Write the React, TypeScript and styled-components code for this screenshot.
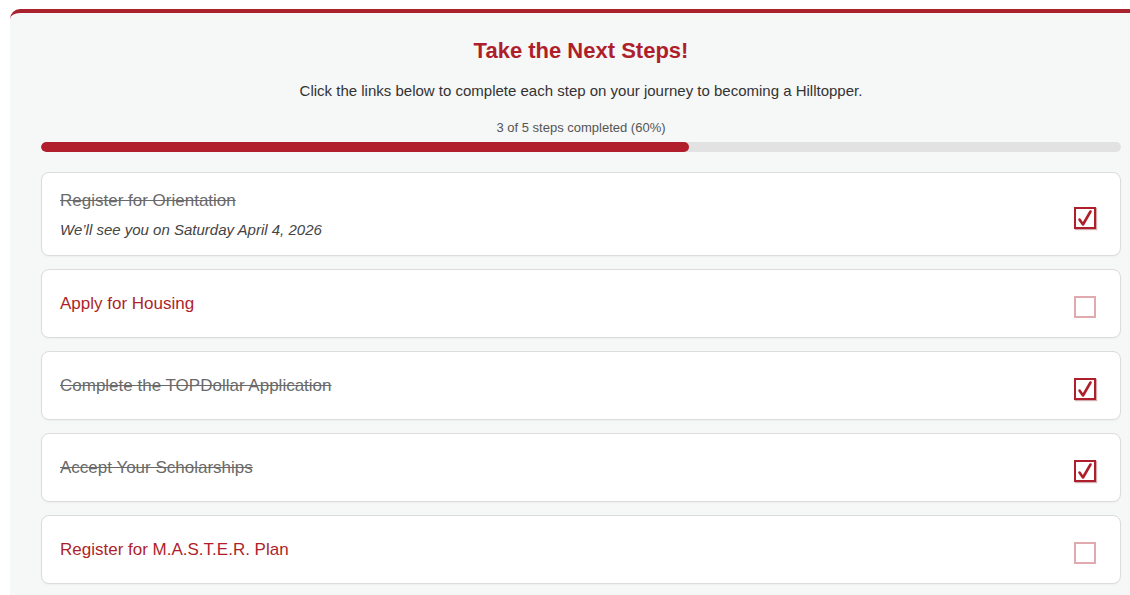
import React from "react";
import styled, { createGlobalStyle } from "styled-components";

const Global = createGlobalStyle`
  html, body { margin: 0; padding: 0; background: #ffffff; overflow: hidden; }
  body { font-family: "Liberation Sans", Arial, sans-serif; }
`;

const Page = styled.div`
  padding: 9px 0 0 10px;
`;

const Panel = styled.section`
  width: 1080px;
  padding: 25px 31px 40px;
  background: #f6f7f7;
  border-top: 4px solid #a8232e;
  border-top-left-radius: 10px;
  border-top-right-radius: 10px;
`;

const Title = styled.h2`
  margin: 0;
  text-align: center;
  font-size: 22px;
  line-height: 26px;
  font-weight: bold;
  color: #ae1f2b;
`;

const Intro = styled.p`
  margin: 17px 0 0;
  text-align: center;
  font-size: 15px;
  line-height: 20px;
  color: #333333;
`;

const ProgressLabel = styled.div`
  margin-top: 19px;
  text-align: center;
  font-size: 13px;
  line-height: 16px;
  color: #555555;
`;

const Track = styled.div`
  margin-top: 6px;
  height: 10px;
  border-radius: 5px;
  background: #e2e2e2;
  overflow: hidden;
`;

const Fill = styled.div`
  height: 100%;
  border-radius: 5px;
  background: #b01f2b;
`;

const List = styled.div`
  margin-top: 20px;
  display: flex;
  flex-direction: column;
  gap: 13px;
`;

const Card = styled.div`
  display: flex;
  align-items: center;
  justify-content: space-between;
  padding: 17px 24px 17px 18px;
  background: #ffffff;
  border: 1px solid #dcdcdc;
  border-radius: 8px;
  box-shadow: 0 1px 2px rgba(0, 0, 0, 0.04);
`;

const Text = styled.div`
  display: flex;
  flex-direction: column;
  gap: 10px;
`;

const StepTitle = styled.a<{ $done: boolean }>`
  font-size: 17px;
  line-height: 21px;
  color: ${(p) => (p.$done ? "#6a6a6a" : "#ae1f2b")};
  text-decoration: ${(p) => (p.$done ? "line-through" : "none")};
  cursor: pointer;
`;

const Note = styled.div`
  font-size: 15px;
  line-height: 17px;
  font-style: italic;
  color: #444444;
`;

const CheckWrap = styled.div`
  height: 33px;
  display: flex;
  align-items: flex-end;
`;

const Box = styled.div<{ $done: boolean }>`
  box-sizing: border-box;
  width: 22px;
  height: 22px;
  margin-bottom: 2px;
  border: 2px solid ${(p) => (p.$done ? "#ae1f2b" : "rgba(174, 31, 43, 0.38)")};
  box-shadow: ${(p) => (p.$done ? "1px 1px 1px rgba(120, 20, 30, 0.35)" : "none")};
  display: flex;
  align-items: center;
  justify-content: center;
`;

const CheckMark = () => (
  <svg width="18" height="18" viewBox="0 0 18 18" fill="none">
    <path
      d="M3.5 10.5 L7 15.5 L14.5 2.5"
      stroke="#ae1f2b"
      strokeWidth="2.6"
      strokeLinecap="round"
      strokeLinejoin="round"
    />
  </svg>
);

type Step = { title: string; done: boolean; note?: string };

const steps: Step[] = [
  { title: "Register for Orientation", done: true, note: "We\u2019ll see you on Saturday April 4, 2026" },
  { title: "Apply for Housing", done: false },
  { title: "Complete the TOPDollar Application", done: true },
  { title: "Accept Your Scholarships", done: true },
  { title: "Register for M.A.S.T.E.R. Plan", done: false },
];

export default function App() {
  const done = steps.filter((s) => s.done).length;
  const pct = Math.round((done / steps.length) * 100);
  return (
    <Page>
      <Global />
      <Panel>
        <Title>Take the Next Steps!</Title>
        <Intro>Click the links below to complete each step on your journey to becoming a Hilltopper.</Intro>
        <ProgressLabel>
          {done} of {steps.length} steps completed ({pct}%)
        </ProgressLabel>
        <Track>
          <Fill style={{ width: `${pct}%` }} />
        </Track>
        <List>
          {steps.map((s) => (
            <Card key={s.title}>
              <Text>
                <StepTitle $done={s.done}>{s.title}</StepTitle>
                {s.note && <Note>{s.note}</Note>}
              </Text>
              <CheckWrap>
                <Box $done={s.done}>{s.done && <CheckMark />}</Box>
              </CheckWrap>
            </Card>
          ))}
        </List>
      </Panel>
    </Page>
  );
}
